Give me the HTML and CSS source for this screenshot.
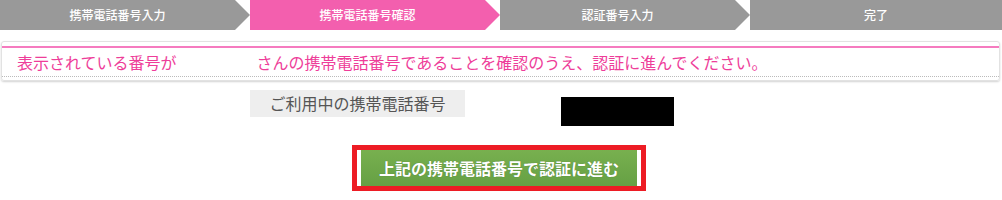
FILE: index.html
```html
<!DOCTYPE html>
<html>

<head>
    <meta charset="utf-8">
    <title>携帯電話番号確認</title>
    <link rel="stylesheet" href="styles.css">
</head>

<body>
    <ol class="steps">
        <li class="step">携帯電話番号入力</li>
        <li class="step current">携帯電話番号確認</li>
        <li class="step">認証番号入力</li>
        <li class="step last">完了</li>
    </ol>

    <div class="noticeBox">
        <p class="notice">表示されている番号が<span class="phoneSlot"></span>さんの携帯電話番号であることを確認のうえ、認証に進んでください。</p>
    </div>

    <div class="phoneRow">
        <div class="phoneLabel">ご利用中の携帯電話番号</div>
        <div class="phoneMasked"></div>
    </div>

    <div class="actionWrap">
        <button type="button" class="submitBtn">上記の携帯電話番号で認証に進む</button>
    </div>
</body>

</html>
```

FILE: styles.css
```css
body {
    margin: 0;
    font-family: "Noto Sans CJK JP", "Liberation Sans", sans-serif;
    background: #fff;
}

.steps {
    display: flex;
    margin: 0;
    padding: 0;
    list-style: none;
    height: 30px;
}

.step {
    width: 250px;
    line-height: 30px;
    padding-right: 15px;
    box-sizing: border-box;
    text-align: center;
    color: #fff;
    font-size: 12px;
    font-weight: 500;
    background: #999;
    clip-path: polygon(0 0, 235px 0, 250px 50%, 235px 100%, 0 100%);
}

.step.current {
    background: #f35fae;
}

.step.last {
    flex: 1;
    padding-right: 0;
    clip-path: none;
}

.noticeBox {
    margin: 11px 2px 0 1px;
    padding: 4px 0 3px;
    border: 1px solid #e2e2e2;
    border-radius: 3px;
    box-shadow: 0 1px 2px rgba(0, 0, 0, 0.18);
}

.notice {
    margin: 0;
    padding-left: 15px;
    border-top: 2px solid #f57bbf;
    border-bottom: 1px dotted #bbb;
    line-height: 28px;
    font-size: 16px;
    color: #ee3d99;
}

.phoneSlot {
    display: inline-block;
    width: 80px;
}

.phoneRow {
    display: flex;
    align-items: flex-start;
    gap: 96px;
    margin-top: 9px;
    padding-left: 250px;
}

.phoneLabel {
    width: 215px;
    height: 27px;
    line-height: 27px;
    text-align: center;
    font-size: 16px;
    color: #555;
    background: #eee;
}

.phoneMasked {
    width: 113px;
    height: 29px;
    margin-top: 7px;
    background: #000;
}

.actionWrap {
    width: 276px;
    margin: 19px 0 0 352px;
    padding: 0 4px;
    border: 5px solid #ed1c24;
    background: #fff;
}

.submitBtn {
    display: block;
    width: 100%;
    height: 36px;
    border: 0;
    padding: 0;
    font-family: inherit;
    font-size: 16px;
    font-weight: bold;
    color: #fff;
    text-shadow: 0 0 1px rgba(0, 0, 0, 0.3);
    background: linear-gradient(#78b04f, #66a044);
    cursor: pointer;
}
```
